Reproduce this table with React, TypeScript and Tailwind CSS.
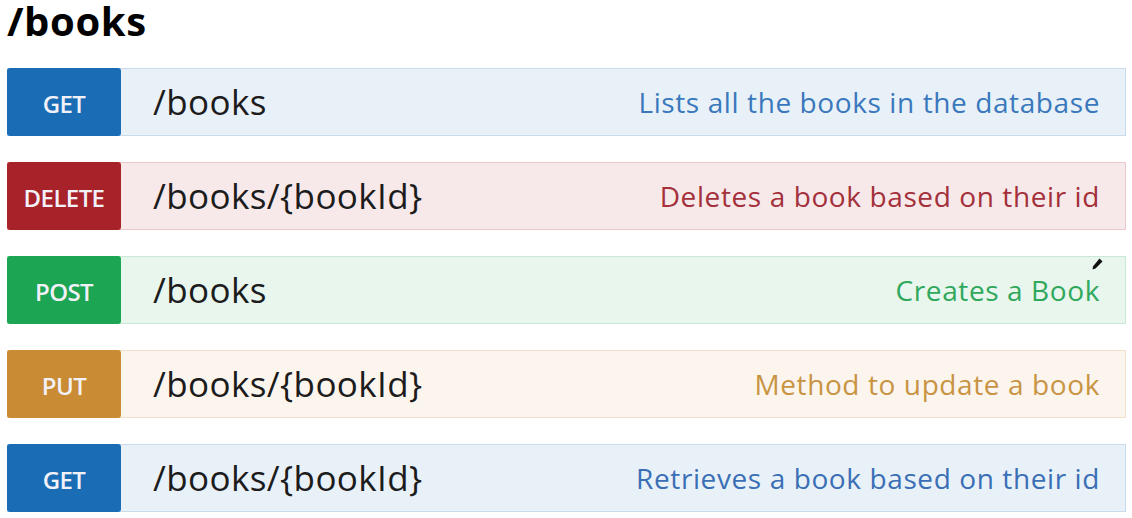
const endpoints = [
  {
    method: "GET",
    path: "/books",
    desc: "Lists all the books in the database",
    badge: "bg-[#1a6db5]",
    row: "bg-[#e9f1f8] border-[#c9dcee]",
    text: "text-[#3a78bd]",
  },
  {
    method: "DELETE",
    path: "/books/{bookId}",
    desc: "Deletes a book based on their id",
    badge: "bg-[#a8222a]",
    row: "bg-[#f7e9ea] border-[#ebcacc]",
    text: "text-[#a3303a]",
  },
  {
    method: "POST",
    path: "/books",
    desc: "Creates a Book",
    badge: "bg-[#1ca552]",
    row: "bg-[#e8f6ee] border-[#c8e9d5]",
    text: "text-[#2fa85c]",
  },
  {
    method: "PUT",
    path: "/books/{bookId}",
    desc: "Method to update a book",
    badge: "bg-[#c98b33]",
    row: "bg-[#fcf5ee] border-[#f1e1cc]",
    text: "text-[#c89443]",
  },
  {
    method: "GET",
    path: "/books/{bookId}",
    desc: "Retrieves a book based on their id",
    badge: "bg-[#1a6db5]",
    row: "bg-[#e9f1f8] border-[#c9dcee]",
    text: "text-[#3a6fb5]",
  },
];

// little pencil cursor sitting over the POST row
function Pencil() {
  return (
    <svg className="absolute right-[22px] top-[1px]" width="11" height="12" viewBox="0 0 11 12">
      <path d="M7.5 0.5 L10.5 3.5 L3.5 10.5 L0.5 11.5 L1.2 8.2 Z" fill="#111" />
    </svg>
  );
}

export default function App() {
  return (
    <div className="w-[1132px] h-[518px] bg-white pl-[7px] pr-[6px] pt-[2px] font-['Open_Sans',sans-serif]">
      <h1 className="h-[38px] text-[40px] font-bold leading-[38px] text-black tracking-[0.6px]">/books</h1>

      <div className="mt-[28px] flex flex-col gap-[26px]">
        {endpoints.map((e, i) => (
          <div key={i} className={`relative flex h-[68px] items-center border ${e.row}`}>
            <div
              className={`-my-px -ml-px flex h-[68px] w-[114px] shrink-0 items-center justify-center rounded-[3px] pt-[3px] ${e.badge}`}
            >
              <span className="text-[24px] font-semibold text-[#f3f1f8] tracking-[-0.6px]">{e.method}</span>
            </div>
            <span className="ml-[32px] text-[35px] text-[#1c1c1c] tracking-[0.4px]">{e.path}</span>
            <span className={`ml-auto mr-[25px] text-[28px] font-medium tracking-[0.6px] ${e.text}`}>{e.desc}</span>
            {e.method === "POST" && <Pencil />}
          </div>
        ))}
      </div>
    </div>
  );
}
